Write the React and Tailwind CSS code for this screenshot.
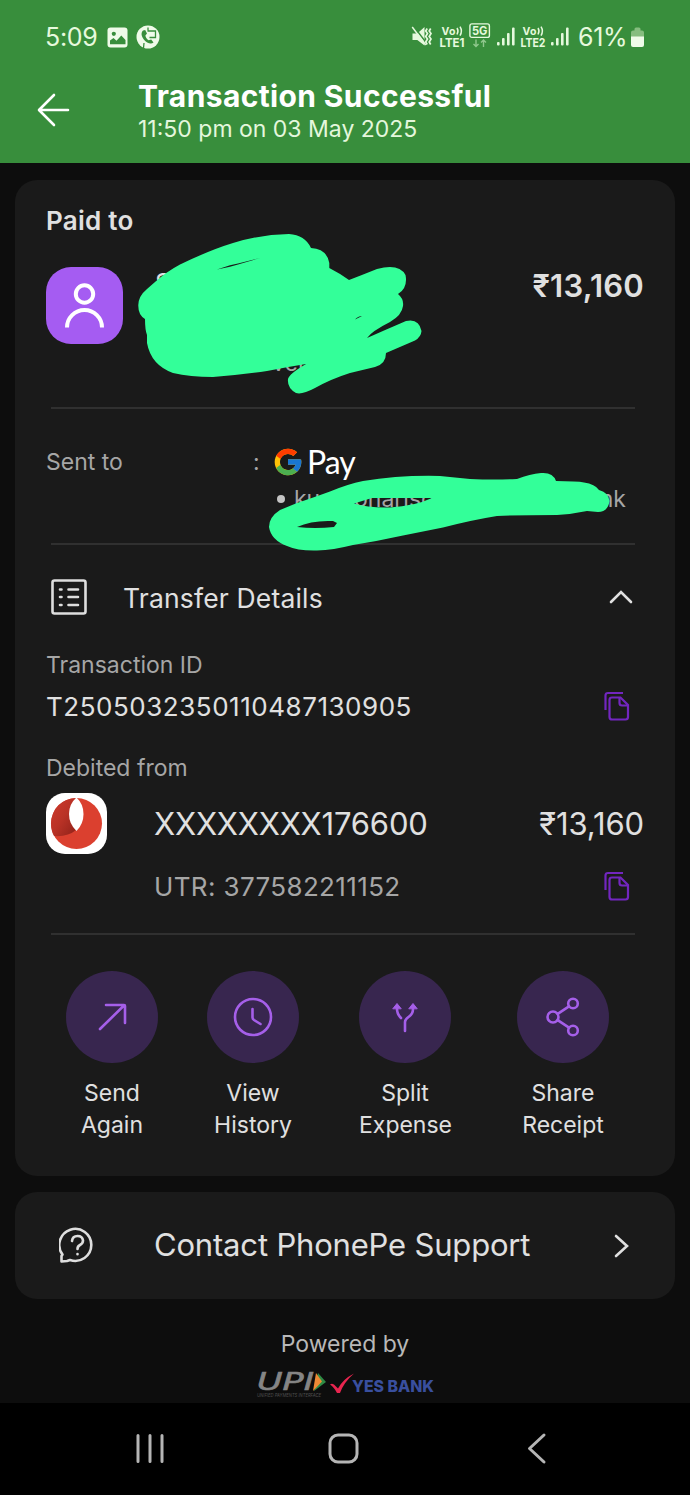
import React from "react";
import { FcGoogle } from "react-icons/fc";

const Signal = () => (
  <svg width="18" height="20" viewBox="0 0 18 20" fill="#e6f9dd">
    <rect x="0" y="15" width="2.6" height="3.6" rx="1" />
    <rect x="5" y="11" width="2.6" height="7.6" rx="1" />
    <rect x="10" y="6" width="2.6" height="12.6" rx="1" />
    <rect x="15" y="0.5" width="2.6" height="18.1" rx="1" />
  </svg>
);

const Volte = ({ sim }) => (
  <svg width="26" height="28" viewBox="0 -3 26 28" fill="#e6f9dd">
    <text x="2.5" y="9" fontSize="10.5" fontWeight="700" textLength="14">
      Vo
    </text>
    <path
      d="M18 2q2 3 0 6.5M21 .7q2.8 4.3 0 9"
      fill="none"
      stroke="#e6f9dd"
      strokeWidth="1.5"
    />
    <text
      x="0.5"
      y="20.5"
      fontSize="11.5"
      fontWeight="700"
      textLength="25"
      lengthAdjust="spacingAndGlyphs"
    >
      {`LTE${sim}`}
    </text>
  </svg>
);

const StatusBar = () => (
  <div className="flex h-[74px] items-center text-[#e6f9dd]">
    <span className="ml-[45px] w-[62px] text-[25px] leading-none tracking-[-0.3px]">
      5:09
    </span>
    <svg width="21" height="21" viewBox="0 0 21 21">
      <rect x="0.5" y="0.5" width="20" height="20" rx="3" fill="#effbe9" />
      <circle cx="6.8" cy="6.8" r="2.1" fill="#388e3c" />
      <path d="M3 17.2v-3.7l3.5-2.5 3 2.8 4.8-5.3 4.2 4.5v4.2z" fill="#388e3c" />
    </svg>
    <svg className="ml-2" width="24" height="24" viewBox="0 0 24 24">
      <circle cx="12" cy="12" r="11.5" fill="#effbe9" />
      <path
        d="M7 5.5c-2 2-2 5.5.8 8.9 3 3.8 7.2 5.1 9.7 3.2l-2.3-3.2-2.6.8c-2-1.2-3-3-3.2-4.7L11 8.6 9.2 5z"
        fill="#388e3c"
      />
      <path
        d="M12 2.5v3M11.5 6h8v6.5h-6M8 18l-.5 5"
        fill="none"
        stroke="#388e3c"
        strokeWidth="1.3"
      />
    </svg>
    <svg className="ml-[251px]" width="22" height="22" viewBox="0 0 22 22">
      <path d="M1.5 7.5h4.8L13.5 1v18.5L6.3 14H1.5z" fill="#e6f9dd" />
      <path d="M2.5 0l14 18.5" stroke="#388e3c" strokeWidth="1.5" />
      <path d="M1.2 1l13.5 18" stroke="#e6f9dd" strokeWidth="1.5" />
      <path
        d="M16.2 2.5l-1.5 2.5 1.8 2.5-1.8 3 1.8 2.5-1.8 3 1.5 2.5M19.7 2.5L18.2 5l1.800 2.500-1.800 3 1.800 2.500-1.800 3 1.500 2.500"
        fill="none"
        stroke="#e6f9dd"
        strokeWidth="1.7"
      />
    </svg>
    <div className="ml-[6px] flex">
      <Volte sim={1} />
    </div>
    <svg className="mb-[2px] ml-[4px]" width="22" height="26" viewBox="0 0 22 26">
      <rect
        x="0.9"
        y="0.9"
        width="19.5"
        height="13.5"
        rx="2"
        fill="none"
        stroke="#e6f9dd"
        strokeWidth="1.4"
      />
      <text
        x="3"
        y="12.1"
        fontSize="12"
        fontWeight="700"
        textLength="15.5"
        lengthAdjust="spacingAndGlyphs"
        fill="#e6f9dd"
      >
        5G
      </text>
      <path
        d="M7 16.500v7m-2.500-2.500l2.500 2.500 2.500-2.500M14.500 24v-7m-2.500 2.500l2.500-2.500 2.500 2.500"
        fill="none"
        stroke="#8fc78d"
        strokeWidth="1.4"
      />
    </svg>
    <div className="ml-[6px] flex items-center gap-[5px]">
      <Signal />
      <Volte sim={2} />
      <Signal />
    </div>
    <span className="ml-[9px] w-[52px] text-[25px] leading-none tracking-[-0.3px]">61%</span>
    <svg width="15" height="21" viewBox="0 0 15 21">
      <path d="M1 10V5.500q0-2 2-2h1.500V2q0-1.500 1.500-1.500h3Q10.500.5 10.500 2v1.500H12q2 0 2 2V10z" fill="#86bd7f" />
      <path d="M1 9.500h13V18q0 2-2 2H3q-2 0-2-2z" fill="#effbe9" />
    </svg>
  </div>
);

const Header = () => (
  <header className="h-[163px] bg-[#388e3c]">
    <StatusBar />
    <div className="flex">
      <svg className="ml-[37px] mt-[18px]" width="34" height="36" viewBox="0 0 34 36">
        <path
          d="M31 18H3M17 3L2 18l15 15"
          fill="none"
          stroke="#fff"
          strokeWidth="2.6"
          strokeLinecap="round"
          strokeLinejoin="round"
        />
      </svg>
      <div className="ml-[67px]">
        <h1 className="mt-[4px] text-[30px] font-bold leading-[36px] tracking-[0.37px] text-white">
          Transaction Successful
        </h1>
        <p className="text-[23px] leading-[30px] text-[#e4f7dc]">11:50 pm on 03 May 2025</p>
      </div>
    </div>
  </header>
);

const Divider = () => <div className="ml-[5px] mr-[9px] h-[2px] bg-[#303030]" />;

const CopyIcon = () => (
  <svg width="26" height="30" viewBox="0 0 26 30" fill="none" stroke="#7226bf" strokeWidth="2.2">
    <path d="M1.500 19V4.500Q1.500 2 4 2H19" />
    <path d="M8 6.500h8.500l7.500 7.500v12q0 2.500-2.500 2.500H8q-2.500 0-2.500-2.500V9Q5.500 6.500 8 6.500z" />
    <path d="M15.500 6.500V12q0 2.500 2.500 2.500h6" />
  </svg>
);

const PayeeScribble = () => (
  <svg
    className="absolute left-[122px] top-[50px]"
    width="290"
    height="170"
    viewBox="137 230 290 170"
    fill="#33ff99"
  >
    <path
      fillRule="evenodd"
      d="M138.300 305Q138.500 296 147 289L155 282Q166 272 180 264.500Q210 250 233 243Q260 234.500 289 234Q305 235 311 248Q327 249 329.300 263V268Q341 274 349 280Q362 275 377 269Q399 263 405.500 275Q408 288 398 294Q404 299 403 306Q402 315 390 322Q372 331 367 338Q385 330 406 321Q419 318 421.500 331Q421 337 415 340.500L386 353Q386 364 375 367L350 373Q331 379 315 388Q302 395 296 393Q287 388 288 379Q289 374 306 364Q287 367 267 371Q240 375 213 377Q190 377 173 373Q151 365 147 343V335Q145 330 145 319Q138 315 138.300 305ZM217 269.500L230 265.300L238 263.500L260 258L238 264.500L230 266.800ZM355 319.500Q358 316 362 316Z"
    />
  </svg>
);

const AccountScribble = () => (
  <svg
    className="absolute left-[252px] top-[288px]"
    width="350"
    height="90"
    viewBox="267 468 350 90"
    fill="#33ff99"
  >
    <path
      fillRule="evenodd"
      d="M269 527Q269 517 280 510L297 503Q312 498 330 491.500Q348 484 363 481Q400 475 440 476L470 479Q495 480 517 479Q530 474 541 473Q553 472 556 481Q577 481 584 482.500Q595 484 599 490Q609 493 609.500 501Q608 512 598 512L587 511Q573 514 557 515Q520 515 497 516Q472 520 443 527.500L403 535.500Q378 541 353 545Q333 550 317 550.500Q298 551 287 546Q271 540 269 527ZM297 527Q312 520 333 521L337 523L334 527Q315 529 297 527ZM354 503.500L372 498H432Q415 506 390 507.500Q368 508 354 503.500Z"
    />
  </svg>
);

const actions = [
  {
    label: ["Send", "Again"],
    icon: <path d="M34 58L58 34.500M40 34h18q1 0 1 1v17" />,
  },
  {
    label: ["View", "History"],
    icon: <path d="M64 46a18 18 0 1 1-36 0 18 18 0 1 1 36 0zM45.500 38v8.500q0 1.500 1.500 2.500l6.500 4" />,
  },
  {
    label: ["Split", "Expense"],
    icon: (
      <>
        <path d="M38 36v2q0 5 4 9M54 36v2q0 5-4.500 8-3.500 2.500-3.500 5v9" />
        <path d="M34 37.500l4-5 4 5zM50 37.500l4-5 4 5z" fill="#a55fe9" strokeWidth="1" />
      </>
    ),
  },
  {
    label: ["Share", "Receipt"],
    icon: (
      <>
        <circle cx="36" cy="46" r="5.500" />
        <circle cx="56" cy="32.500" r="4.800" />
        <circle cx="56" cy="59.500" r="4.800" />
        <path d="M40.700 42.800L52 35.300M40.700 49.200L52 56.700" />
      </>
    ),
  },
];

const TransactionCard = () => (
  <section className="relative mx-[15px] mt-[17px] h-[996px] rounded-[22px] bg-[#1a1a1a] px-[31px] text-[#e0e0e0]">
    <h2 className="pt-[25px] text-[26px] font-semibold leading-[32px] tracking-[0.25px]">
      Paid to
    </h2>

    <div className="mt-[30px] flex h-[77px]">
      <div className="flex h-[77px] w-[77px] items-center justify-center rounded-[25px] bg-[#a55cf2]">
        <svg width="44" height="50" viewBox="0 0 44 50" fill="none" stroke="#fff" strokeWidth="4">
          <circle cx="21.500" cy="13" r="8.700" />
          <path d="M4 46.500a17.500 17.500 0 0 1 35 0" />
        </svg>
      </div>
      <span className="ml-[32px] text-[26px] leading-[32px]">S</span>
      <span className="ml-auto text-[31px] font-semibold leading-[37px] tracking-[0.2px]">
        ₹13,160
      </span>
    </div>
    <div className="ml-[226px] flex h-[63px] pt-[3px] text-[23px] leading-[32px] text-[#a6a6a6]">
      ver
    </div>
    <Divider />

    <div className="mt-[36px] flex h-[34px] items-center">
      <span className="w-[207px] text-[23px] leading-none text-[#a6a6a6]">Sent to</span>
      <span className="w-[19px] text-[23px] leading-none text-[#a6a6a6]">:</span>
      <FcGoogle size={32} />
      <span className="ml-[3px] font-['Lato'] text-[32px] leading-none tracking-[-1px] text-white">
        Pay
      </span>
    </div>
    <div className="ml-[231px] mt-[4px] flex h-[32px] items-center text-[23px] leading-none text-[#a6a6a6]">
      <i className="mr-[9px] h-[8px] w-[8px] rounded-full bg-[#c4c4c4]" />
      <span className="w-[60px]">ku</span>
      <span>ohariso</span>
      <span className="ml-auto mr-[18px]">nk</span>
    </div>
    <div className="h-[28px]" />
    <Divider />

    <div className="mt-[34px] flex h-[38px] items-center">
      <svg
        className="mb-[2px] ml-[5px]"
        width="36"
        height="36"
        viewBox="0 0 36 36"
        fill="none"
        stroke="#dedede"
        strokeWidth="2.6"
        strokeLinecap="round"
      >
        <rect x="1.500" y="1.500" width="33" height="33" rx="2" />
        <path d="M9 10.500h1.500M9 18h1.500M9 26h1.500M17.500 10.500h9.500M17.500 18h9.500M17.500 26h9.500" />
      </svg>
      <h3 className="ml-[36px] text-[26.5px] leading-none tracking-[0.17px]">Transfer Details</h3>
      <svg className="mb-[2px] ml-auto mr-[10px]" width="26" height="16" viewBox="0 0 26 16">
        <path
          d="M3 13L13 3l10 10"
          fill="none"
          stroke="#e0e0e0"
          strokeWidth="2.6"
          strokeLinecap="round"
        />
      </svg>
    </div>

    <p className="mt-[32px] text-[23px] leading-[32px] text-[#a6a6a6]">Transaction ID</p>
    <div className="mt-[10px] flex h-[32px] items-center justify-between">
      <span className="text-[26px] leading-none tracking-[0.53px]">T2505032350110487130905</span>
      <div className="mb-[2px] mr-[14px] flex">
        <CopyIcon />
      </div>
    </div>

    <p className="mt-[29px] text-[23px] leading-[32px] text-[#a6a6a6]">Debited from</p>
    <div className="mt-[9px] flex h-[61px] items-center">
      <svg width="61" height="61" viewBox="0 0 61 61">
        <defs>
          <linearGradient id="bankShade" x1="0" y1="0" x2="1" y2="1">
            <stop offset="0" stopColor="#d03a2c" />
            <stop offset="0.5" stopColor="#b93226" />
            <stop offset="1" stopColor="#8f2119" />
          </linearGradient>
        </defs>
        <rect width="61" height="61" rx="19" fill="#fff" />
        <circle cx="30.500" cy="30.500" r="25.500" fill="#db402f" />
        <path d="M30 5Q7 7 5 30q0 8 3 13 14 1 22-6Q17 21 30 5z" fill="url(#bankShade)" />
        <path d="M30.500 4.500Q37.500 11 37.500 21T30.500 38Q23 31 23 21T30.500 4.500z" fill="#fff" />
      </svg>
      <span className="ml-[47px] text-[31px] leading-none tracking-[-0.2px]">XXXXXXXX176600</span>
      <span className="ml-auto text-[31px] leading-none tracking-[-0.1px]">₹13,160</span>
    </div>
    <div className="ml-[108px] mt-[16px] flex h-[34px] items-center justify-between">
      <span className="text-[26px] leading-none tracking-[0.36px] text-[#a6a6a6]">
        UTR: 377582211152
      </span>
      <div className="mb-[2px] mr-[14px] flex">
        <CopyIcon />
      </div>
    </div>
    <div className="h-[29px]" />
    <Divider />

    <div className="ml-[20px] mt-[36px] grid grid-cols-[141px_152px_158px_92px]">
      {actions.map(({ label, icon }) => (
        <div key={label[0]} className="w-[92px] text-center text-[23px] leading-[31.5px]">
          <svg
            className="mb-[15px] rounded-full bg-[#38264f]"
            width="92"
            height="92"
            viewBox="0 0 92 92"
            fill="none"
            stroke="#a55fe9"
            strokeWidth="2.6"
            strokeLinecap="round"
          >
            {icon}
          </svg>
          {label[0]}
          <br />
          {label[1]}
        </div>
      ))}
    </div>

    <PayeeScribble />
    <AccountScribble />
  </section>
);

const SupportCard = () => (
  <section className="mx-[15px] mt-[16px] flex h-[107px] items-center rounded-[22px] bg-[#1a1a1a] text-[#e0e0e0]">
    <svg
      className="ml-[44px]"
      width="37"
      height="37"
      viewBox="0 0 37 37"
      fill="none"
      stroke="#dedede"
      strokeWidth="2.6"
      strokeLinecap="round"
      strokeLinejoin="round"
    >
      <path d="M2.500 34.500V29l1-1.500A16 16 0 1 1 11 33l-3 1z" />
      <path d="M13 14q.5-5 5.500-5t5.500 4.500q0 3-3 4.500-2.500 1.200-2.500 4M18.500 27v.2" />
    </svg>
    <span className="mb-[2px] ml-[58px] text-[31px] leading-none tracking-[-0.18px]">
      Contact PhonePe Support
    </span>
    <svg className="ml-auto mr-[45px]" width="17" height="26" viewBox="0 0 17 26">
      <path
        d="M3 3l11 10L3 23"
        fill="none"
        stroke="#e0e0e0"
        strokeWidth="2.6"
        strokeLinecap="round"
      />
    </svg>
  </section>
);

const PoweredBy = () => (
  <footer className="h-[104px] pt-[29px]">
    <p className="text-center text-[23px] leading-[32px] text-[#b8b8b8]">Powered by</p>
    <div className="ml-[256px] mt-[3px] flex">
      <svg width="72" height="36" viewBox="0 -7 72 36">
        <text
          x="1"
          y="20"
          fontFamily="DejaVu Sans"
          fontSize="25"
          fontStyle="italic"
          textLength="57"
          lengthAdjust="spacingAndGlyphs"
          fill="#858585"
          stroke="#858585"
          strokeWidth="0.6"
        >
          UPI
        </text>
        <path d="M62 3l8 9-12 9z" fill="#2e8b45" />
        <path d="M60 3l6 8.500L57 21z" fill="#f08a35" />
        <text
          x="1"
          y="26.500"
          fontSize="5"
          fontStyle="italic"
          textLength="64"
          lengthAdjust="spacingAndGlyphs"
          fill="#4d4d4d"
        >
          UNIFIED PAYMENTS INTERFACE
        </text>
      </svg>
      <svg className="ml-[1px]" width="108" height="36" viewBox="0 -7 108 36">
        <path d="M1 14.500q3-2 6 2l2 2Q14 9 25 3.500 15 12 11 23H8Q5 17 1 14.500z" fill="#e8254f" />
        <text
          x="23"
          y="22.300"
          fontSize="16.500"
          fontWeight="800"
          textLength="82"
          lengthAdjust="spacingAndGlyphs"
          fill="#394f9e"
        >
          YES BANK
        </text>
      </svg>
    </div>
  </footer>
);

const NavBar = () => (
  <nav className="h-[92px] bg-black">
    <svg
      width="690"
      height="92"
      viewBox="0 0 690 92"
      fill="none"
      stroke="#b5b5b5"
      strokeWidth="3"
      strokeLinecap="round"
    >
      <path d="M138 32.500v26M150 32.500v26M162 32.500v26" />
      <rect x="330" y="32" width="27" height="27" rx="8" />
      <path d="M544 32l-14.500 13.500L544 59" strokeLinejoin="round" />
    </svg>
  </nav>
);

const App = () => {
  return (
    <div className="h-[1495px] w-[690px] overflow-hidden bg-[#0d0d0d] font-['Inter',sans-serif]">
      <Header />
      <TransactionCard />
      <SupportCard />
      <PoweredBy />
      <NavBar />
    </div>
  );
};

export default App;
